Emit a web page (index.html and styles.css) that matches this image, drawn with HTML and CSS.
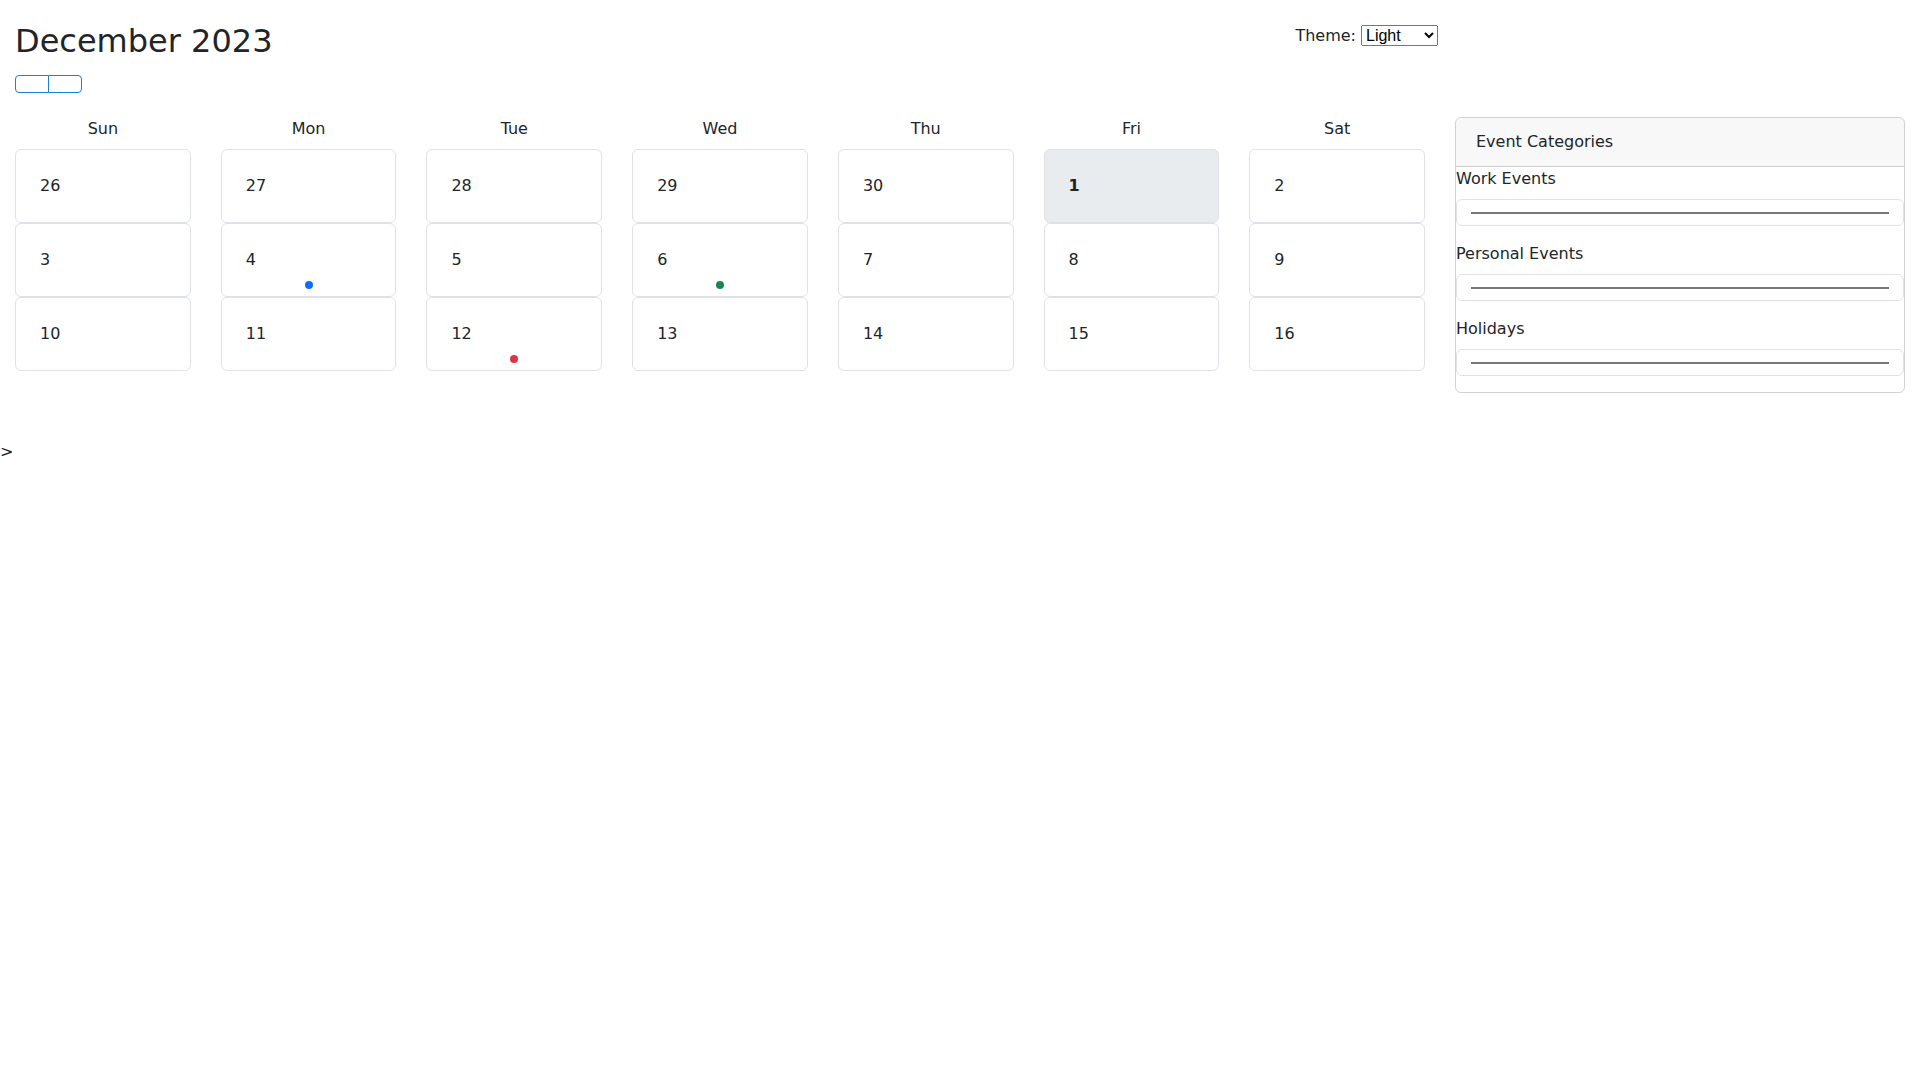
FILE: index.html
```html
<!DOCTYPE html>
<html lang="en">
<head>
    <meta charset="UTF-8">
    <meta name="viewport" content="width=device-width, initial-scale=1.0">
    <title>Calendar</title>
    <link rel="stylesheet" href="styles.css">
</head>
<body>
    <div class="page">
        <!-- Cabecera: mes y navegacion -->
        <header class="cal-header">
            <div>
                <h2 class="month-title">December 2023</h2>
                <div class="nav-group">
                    <button class="nav-btn" aria-label="Previous month"></button>
                    <button class="nav-btn" aria-label="Next month"></button>
                </div>
            </div>
            <div class="theme-switch">
                <label for="theme">Theme:</label>
                <select id="theme">
                    <option>Light</option>
                    <option>Dark</option>
                    <option>System</option>
                </select>
            </div>
        </header>

        <!-- Calendario -->
        <main class="calendar">
            <div class="cal-row weekdays">
                <div class="cal-col">Sun</div>
                <div class="cal-col">Mon</div>
                <div class="cal-col">Tue</div>
                <div class="cal-col">Wed</div>
                <div class="cal-col">Thu</div>
                <div class="cal-col">Fri</div>
                <div class="cal-col">Sat</div>
            </div>

            <div class="cal-row">
                <div class="cal-col"><div class="day">26</div></div>
                <div class="cal-col"><div class="day">27</div></div>
                <div class="cal-col"><div class="day">28</div></div>
                <div class="cal-col"><div class="day">29</div></div>
                <div class="cal-col"><div class="day">30</div></div>
                <div class="cal-col"><div class="day today">1</div></div>
                <div class="cal-col"><div class="day">2</div></div>
            </div>
            <div class="cal-row">
                <div class="cal-col"><div class="day">3</div></div>
                <div class="cal-col"><div class="day">4<span class="dot dot-work"></span></div></div>
                <div class="cal-col"><div class="day">5</div></div>
                <div class="cal-col"><div class="day">6<span class="dot dot-personal"></span></div></div>
                <div class="cal-col"><div class="day">7</div></div>
                <div class="cal-col"><div class="day">8</div></div>
                <div class="cal-col"><div class="day">9</div></div>
            </div>
            <div class="cal-row">
                <div class="cal-col"><div class="day">10</div></div>
                <div class="cal-col"><div class="day">11</div></div>
                <div class="cal-col"><div class="day">12<span class="dot dot-holiday"></span></div></div>
                <div class="cal-col"><div class="day">13</div></div>
                <div class="cal-col"><div class="day">14</div></div>
                <div class="cal-col"><div class="day">15</div></div>
                <div class="cal-col"><div class="day">16</div></div>
            </div>
        </main>

        <!-- Categorias -->
        <aside class="sidebar">
            <div class="card">
                <div class="card-header">Event Categories</div>
                <div class="card-body">
                    <label class="cat-label" for="c-work">Work Events</label>
                    <input class="cat-color" type="color" id="c-work" value="#0d6efd">
                    <label class="cat-label" for="c-personal">Personal Events</label>
                    <input class="cat-color" type="color" id="c-personal" value="#198754">
                    <label class="cat-label" for="c-holiday">Holidays</label>
                    <input class="cat-color" type="color" id="c-holiday" value="#dc3545">
                </div>
            </div>
        </aside>
    </div>
    &gt;
</body>
</html>
```

FILE: styles.css
```css
body {
    margin: 0;
    font-family: "DejaVu Sans", sans-serif;
    font-size: 16px;
    line-height: 24px;
    color: #212529;
    background: #fff;
}

.page {
    display: grid;
    grid-template-columns: 1440px 480px;
    padding-bottom: 47px;
}

/* Cabecera */
.cal-header {
    grid-column: 1;
    display: flex;
    justify-content: space-between;
    align-items: flex-start;
    padding: 22px 2px 0 15px;
    margin-bottom: 24px;
}

.month-title {
    margin: 0 0 15px;
    font-size: 32px;
    font-weight: 400;
    line-height: 1.2;
}

.nav-group {
    display: flex;
}

.nav-btn {
    width: 34px;
    height: 18px;
    padding: 0;
    background: #fff;
    border: 1px solid #1c7ed6;
    cursor: pointer;
}

.nav-btn:first-child {
    border-radius: 4px 0 0 4px;
}

.nav-btn:last-child {
    margin-left: -1px;
    border-radius: 0 4px 4px 0;
}

.theme-switch {
    display: flex;
    align-items: baseline;
    gap: 5px;
    padding-top: 2px;
}

.theme-switch select {
    width: 77px;
    font-family: "Liberation Sans", Arial, sans-serif;
    font-size: 16px;
}

/* Calendario */
.calendar {
    grid-column: 1;
    padding: 0 15px;
}

.cal-row {
    display: flex;
    margin: 0 -15px;
}

.cal-col {
    flex: 1 0 0;
    padding: 0 15px;
    min-width: 0;
}

.weekdays {
    text-align: center;
    margin-bottom: 8px;
}

.day {
    position: relative;
    padding: 24px;
    border: 1px solid #dee2e6;
    border-radius: 6px;
}

.day.today {
    background-color: #e9ecef;
    font-weight: 700;
}

.dot {
    position: absolute;
    left: 50%;
    bottom: 7px;
    width: 8px;
    height: 8px;
    margin-left: -4px;
    border-radius: 50%;
}

.dot-work { background: #0d6efd; }
.dot-personal { background: #198754; }
.dot-holiday { background: #dc3545; }

/* Barra lateral */
.sidebar {
    grid-column: 2;
    grid-row: 2;
    padding: 0 15px;
}

.card {
    border: 1px solid rgba(0, 0, 0, 0.175);
    border-radius: 6px;
    overflow: hidden;
}

.card-header {
    padding: 12px 20px;
    background-color: rgba(33, 37, 41, 0.03);
    border-bottom: 1px solid rgba(0, 0, 0, 0.175);
}

.cat-label {
    display: block;
    margin-bottom: 8px;
}

.cat-color {
    display: block;
    box-sizing: border-box;
    width: 100%;
    height: 27px;
    margin: 0 0 16px;
    padding: 6px 12px;
    background: #fff;
    border: 1px solid #dee2e6;
    border-radius: 6px;
    cursor: pointer;
}

.cat-color::-webkit-color-swatch-wrapper {
    padding: 6px 2px 5px;
}

.cat-color::-webkit-color-swatch {
    border: 1px solid #777;
    border-radius: 0;
}
```
